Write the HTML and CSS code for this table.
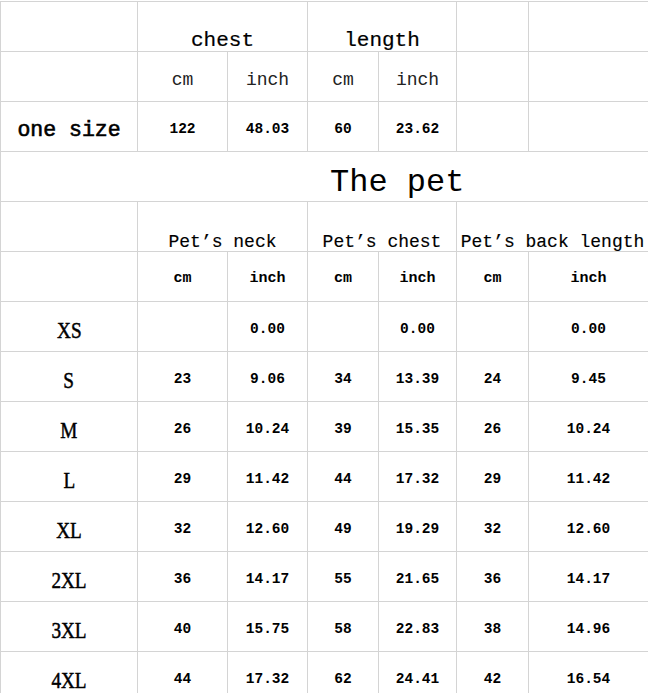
FILE: index.html
```html
<!DOCTYPE html>
<html>
<head>
<meta charset="utf-8">
<link rel="stylesheet" href="styles.css">
</head>
<body>
<div class="sheet">
  <div class="c"></div>
  <div class="c s2 h1">chest</div>
  <div class="c s2 h1">length</div>
  <div class="c"></div>
  <div class="c"></div>

  <div class="c"></div>
  <div class="c u1">cm</div>
  <div class="c u1">inch</div>
  <div class="c u1">cm</div>
  <div class="c u1">inch</div>
  <div class="c"></div>
  <div class="c"></div>

  <div class="c one">one size</div>
  <div class="c n">122</div>
  <div class="c n">48.03</div>
  <div class="c n">60</div>
  <div class="c n">23.62</div>
  <div class="c"></div>
  <div class="c"></div>

  <div class="c s7 title">The pet</div>

  <div class="c"></div>
  <div class="c s2 h2">Pet’s neck</div>
  <div class="c s2 h2">Pet’s chest</div>
  <div class="c s2 h2">Pet’s back length</div>

  <div class="c"></div>
  <div class="c u2">cm</div>
  <div class="c u2">inch</div>
  <div class="c u2">cm</div>
  <div class="c u2">inch</div>
  <div class="c u2">cm</div>
  <div class="c u2">inch</div>

  <div class="c sz"><span class="lbl">XS</span></div>
  <div class="c n"></div><div class="c n">0.00</div>
  <div class="c n"></div><div class="c n">0.00</div>
  <div class="c n"></div><div class="c n">0.00</div>

  <div class="c sz"><span class="lbl">S</span></div>
  <div class="c n">23</div><div class="c n">9.06</div>
  <div class="c n">34</div><div class="c n">13.39</div>
  <div class="c n">24</div><div class="c n">9.45</div>

  <div class="c sz"><span class="lbl">M</span></div>
  <div class="c n">26</div><div class="c n">10.24</div>
  <div class="c n">39</div><div class="c n">15.35</div>
  <div class="c n">26</div><div class="c n">10.24</div>

  <div class="c sz"><span class="lbl">L</span></div>
  <div class="c n">29</div><div class="c n">11.42</div>
  <div class="c n">44</div><div class="c n">17.32</div>
  <div class="c n">29</div><div class="c n">11.42</div>

  <div class="c sz"><span class="lbl">XL</span></div>
  <div class="c n">32</div><div class="c n">12.60</div>
  <div class="c n">49</div><div class="c n">19.29</div>
  <div class="c n">32</div><div class="c n">12.60</div>

  <div class="c sz"><span class="lbl">2XL</span></div>
  <div class="c n">36</div><div class="c n">14.17</div>
  <div class="c n">55</div><div class="c n">21.65</div>
  <div class="c n">36</div><div class="c n">14.17</div>

  <div class="c sz"><span class="lbl">3XL</span></div>
  <div class="c n">40</div><div class="c n">15.75</div>
  <div class="c n">58</div><div class="c n">22.83</div>
  <div class="c n">38</div><div class="c n">14.96</div>

  <div class="c sz"><span class="lbl">4XL</span></div>
  <div class="c n">44</div><div class="c n">17.32</div>
  <div class="c n">62</div><div class="c n">24.41</div>
  <div class="c n">42</div><div class="c n">16.54</div>
</div>
</body>
</html>
```
FILE: styles.css
```css
html, body {
  margin: 0;
  padding: 0;
  overflow: hidden;
  background: #fff;
}

.sheet {
  display: grid;
  grid-template-columns: 136px 89px 79px 70px 77px 71px 119px;
  grid-auto-rows: 49px;
  gap: 1px;
  width: 648px;
  margin-top: 1px;
  padding: 1px;
  background: #d4d4d4;
  font-family: "Liberation Mono", "DejaVu Sans Mono", monospace;
  color: #000;
}

.c {
  background: #fff;
  text-align: center;
  line-height: 1;
  white-space: nowrap;
  box-sizing: border-box;
}

.s2 { grid-column: span 2; }
.s7 { grid-column: span 7; }

.h1 {
  font-size: 21px;
  padding-top: 28px;
  -webkit-text-stroke: 0.2px #000;
}

.u1 {
  font-size: 18px;
  padding-top: 19px;
  color: #222;
}

.one {
  font-size: 21.5px;
  padding-top: 18px;
  -webkit-text-stroke: 0.6px #000;
}

.n {
  font-size: 14.5px;
  font-weight: bold;
  padding-top: 20px;
}

.title {
  font-size: 32px;
  text-align: left;
  padding-left: 329px;
  padding-top: 15px;
}

.h2 {
  font-size: 18px;
  padding-top: 31px;
  -webkit-text-stroke: 0.15px #000;
}

.u2 {
  font-size: 15px;
  font-weight: bold;
  padding-top: 19px;
}

.sz {
  font-family: "Liberation Serif", "DejaVu Serif", serif;
  font-size: 24px;
  padding-top: 16px;
  -webkit-text-stroke: 0.5px #000;
}

.lbl {
  display: inline-block;
  transform: scaleX(0.8);
}
```
